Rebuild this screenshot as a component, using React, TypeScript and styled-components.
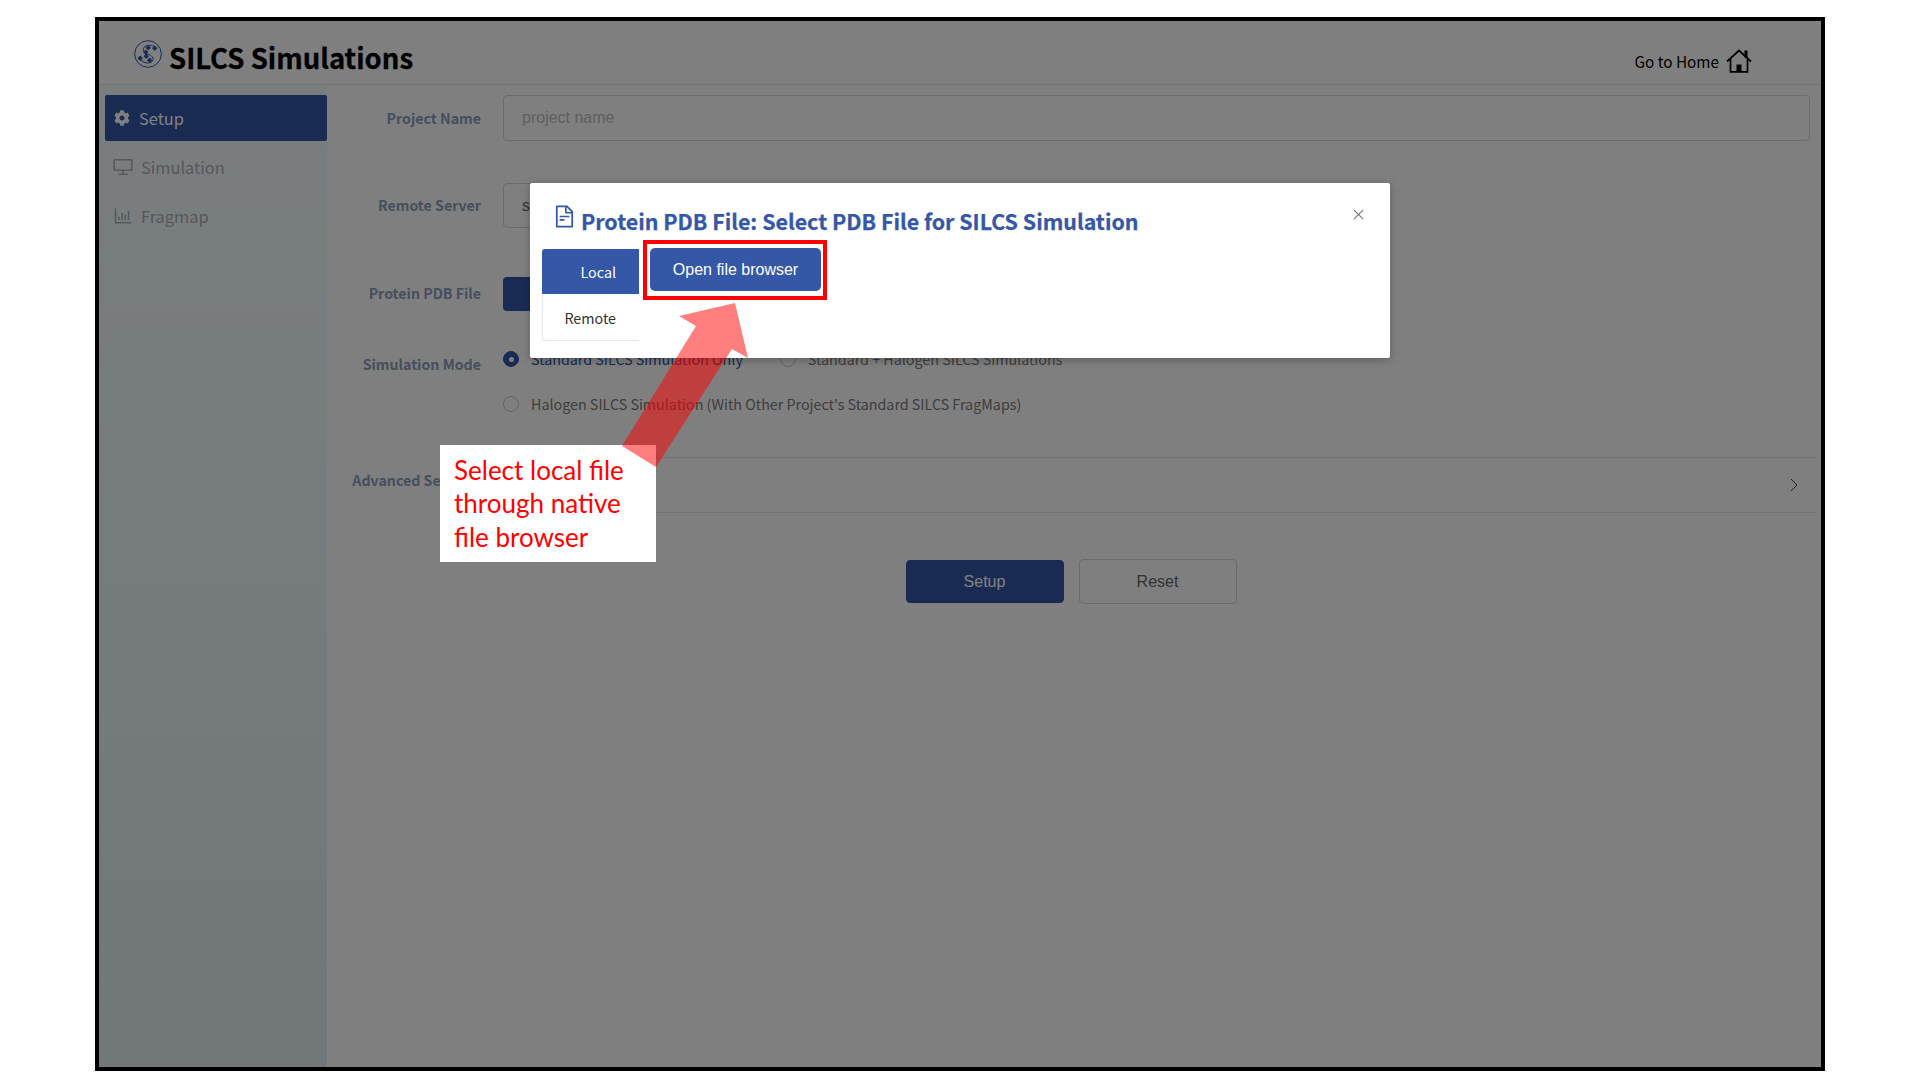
import React from "react";
import styled, { createGlobalStyle } from "styled-components";
import { AiOutlineBarChart, AiOutlineDesktop, AiOutlineFileText, AiOutlineClose } from "react-icons/ai";
import { FaCog } from "react-icons/fa";

const Global = createGlobalStyle`
  html, body { margin: 0; padding: 0; background: #fff; }
  * { box-sizing: border-box; }
  body { font-family: "Noto Sans CJK SC", "Noto Sans", sans-serif; }
`;

const Page = styled.div`
  position: relative;
  width: 1920px;
  height: 1080px;
  overflow: hidden;
  padding: 17px 0 0 95px;
`;

const Frame = styled.div`
  position: relative;
  width: 1730px;
  height: 1054px;
  border: 4px solid #000;
  background: #fff;
  display: flex;
  flex-direction: column;
  overflow: hidden;
`;

const Header = styled.header`
  height: 64px;
  flex: none;
  display: flex;
  align-items: center;
  justify-content: space-between;
  padding: 10px 69px 0 35px;
  border-bottom: 1px solid #e4e4e4;
`;

const Brand = styled.div`
  display: flex;
  align-items: center;
  gap: 7px;
  margin-top: -8px;
`;

const BrandName = styled.h1`
  margin: 0;
  padding-top: 7px;
  font-size: 27.5px;
  font-weight: 700;
  line-height: 33px;
  color: #000;
  -webkit-text-stroke: 0.3px #000;
`;

const HomeLink = styled.a`
  display: flex;
  align-items: center;
  gap: 7px;
  margin-top: 7px;
  font-size: 15.3px;
  color: #000;
`;

const Body = styled.div`
  flex: 1;
  display: flex;
  min-height: 0;
`;

const Sidebar = styled.nav`
  width: 228px;
  flex: none;
  padding: 10px 0 0 6px;
  background: linear-gradient(180deg, #f4fcff 0%, #e4f0f4 100%);
  display: flex;
  flex-direction: column;
  gap: 3px;
`;

const NavItem = styled.div<{ $active?: boolean }>`
  height: 46px;
  display: flex;
  align-items: center;
  gap: ${(p) => (p.$active ? "9px" : "7px")};
  padding-left: ${(p) => (p.$active ? "9px" : "7px")};
  border-radius: 2px;
  font-size: 16.4px;
  background: ${(p) => (p.$active ? "#3557a7" : "transparent")};
  color: ${(p) => (p.$active ? "#fff" : "#aab2b6")};
  svg { font-size: ${(p) => (p.$active ? "16px" : "22px")}; flex: none; }
`;

const Main = styled.main`
  flex: 1;
  padding-top: 10px;
  min-width: 0;
`;

const Row = styled.div<{ $mt?: number; $h?: number; $center?: boolean }>`
  display: grid;
  grid-template-columns: 154px 1fr;
  column-gap: 22px;
  margin-top: ${(p) => p.$mt ?? 0}px;
  min-height: ${(p) => p.$h ?? 46}px;
  padding-right: 11px;
  align-items: ${(p) => (p.$center === false ? "start" : "center")};
`;

const Label = styled.label<{ $pt?: number; $pb?: number }>`
  text-align: right;
  font-size: 14.2px;
  font-weight: 700;
  color: #8c9ebf;
  white-space: nowrap;
  padding-top: ${(p) => p.$pt ?? 0}px;
  padding-bottom: ${(p) => p.$pb ?? 2}px;
`;

const Input = styled.div<{ $placeholder?: boolean; $narrow?: boolean }>`
  height: 100%;
  min-height: 45px;
  max-width: ${(p) => (p.$narrow ? "600px" : "none")};
  display: flex;
  align-items: center;
  padding: 0 18px;
  border: 1px solid #d9d9d9;
  border-radius: 4px;
  font-family: "Liberation Sans", Arial, sans-serif;
  font-size: 16px;
  color: ${(p) => (p.$placeholder ? "#bfbfbf" : "#666")};
`;

const PickerButton = styled.div`
  width: 170px;
  height: 34px;
  background: #3557a7;
  border-radius: 4px;
`;

const RadioGrid = styled.div`
  display: flex;
  flex-direction: column;
  gap: 27px;
`;

const RadioLine = styled.div`
  display: flex;
  gap: 37px;
  height: 18px;
  align-items: center;
`;

const Radio = styled.div`
  display: flex;
  align-items: center;
  gap: 12px;
`;

const RadioDot = styled.span<{ $on?: boolean }>`
  width: 16px;
  height: 16px;
  border-radius: 50%;
  flex: none;
  background: ${(p) => (p.$on ? "#3557a7" : "transparent")};
  border: 1px solid ${(p) => (p.$on ? "#3557a7" : "#c8c8c8")};
  display: flex;
  align-items: center;
  justify-content: center;
  &::after {
    content: "";
    width: 5px;
    height: 5px;
    border-radius: 50%;
    background: ${(p) => (p.$on ? "#fff" : "transparent")};
  }
`;

const RadioText = styled.span<{ $on?: boolean }>`
  font-size: 14.3px;
  line-height: 18px;
  color: ${(p) => (p.$on ? "#3557a7" : "#7c7c7c")};
  white-space: nowrap;
`;

const Collapse = styled.div`
  height: 56px;
  border-top: 1px solid #e8e8e8;
  border-bottom: 1px solid #e8e8e8;
  display: flex;
  align-items: center;
  justify-content: flex-end;
  padding-right: 18px;
  margin-right: -6px;
`;

const Chevron = () => (
  <svg width="8" height="14" viewBox="0 0 8 14" fill="none" stroke="#4a4a4a" strokeWidth="1">
    <path d="M1 1L7 7L1 13" />
  </svg>
);

const Actions = styled.div`
  margin-top: 46px;
  display: flex;
  justify-content: center;
  gap: 15px;
  padding-right: 6px;
`;

const ActionButton = styled.button<{ $primary?: boolean }>`
  width: 158px;
  height: ${(p) => (p.$primary ? "43px" : "45px")};
  margin-top: ${(p) => (p.$primary ? "1px" : "0")};
  border-radius: 4px;
  font-family: "Liberation Sans", Arial, sans-serif;
  font-size: 16px;
  background: ${(p) => (p.$primary ? "#3557a7" : "#fff")};
  color: ${(p) => (p.$primary ? "#fff" : "#666")};
  border: 1px solid ${(p) => (p.$primary ? "#3557a7" : "#d9d9d9")};
`;

const Overlay = styled.div`
  position: absolute;
  inset: 0;
  background: rgba(0, 0, 0, 0.5);
`;

const Modal = styled.section`
  position: absolute;
  left: 431px;
  top: 162px;
  width: 860px;
  height: 175px;
  background: #fff;
  border-radius: 2px;
  box-shadow: 0 2px 8px rgba(0, 0, 0, 0.25);
  padding: 20px 12px;
`;

const ModalHead = styled.div`
  height: 45px;
  display: flex;
  align-items: flex-start;
  padding-left: 10px;
  gap: 4px;
  color: #3557a7;
  svg { font-size: 25px; flex: none; margin-top: 1px; }
`;

const ModalTitle = styled.h2`
  margin: 2px 0 0;
  font-size: 21.4px;
  line-height: 32px;
  font-weight: 700;
  color: #3557a7;
  white-space: nowrap;
  -webkit-text-stroke: 0.25px #3557a7;
`;

const Close = styled.span`
  position: absolute;
  right: 24px;
  top: 24px;
  color: #777;
  display: flex;
  svg { font-size: 15px; }
`;

const ModalBody = styled.div`
  display: flex;
  gap: 11px;
  align-items: flex-start;
`;

const Tabs = styled.div`
  width: 97px;
  margin-top: 1px;
  flex: none;
`;

const Tab = styled.div<{ $active?: boolean }>`
  height: ${(p) => (p.$active ? "45px" : "47px")};
  padding-right: 23px;
  display: flex;
  align-items: center;
  justify-content: flex-end;
  font-size: 14.3px;
  color: ${(p) => (p.$active ? "#fff" : "#333")};
  background: ${(p) => (p.$active ? "#3557a7" : "#fff")};
  border-radius: ${(p) => (p.$active ? "3px 0 0 0" : "0 0 0 3px")};
  border-left: 1px solid ${(p) => (p.$active ? "#3557a7" : "#e6e6ee")};
  border-bottom: ${(p) => (p.$active ? "0" : "1px solid #e6e6ee")};
`;

const OpenButton = styled.button`
  width: 171px;
  height: 43px;
  border: none;
  border-radius: 5px;
  background: #3557a7;
  color: #fff;
  font-family: "Liberation Sans", Arial, sans-serif;
  font-size: 16px;
  padding: 0;
`;

const Highlight = styled.div`
  position: absolute;
  left: 643px;
  top: 240px;
  width: 184px;
  height: 60px;
  border: 4px solid #ff0000;
`;

const Callout = styled.div`
  position: absolute;
  left: 440px;
  top: 445px;
  width: 216px;
  height: 117px;
  background: #fff;
  padding: 9px 0 0 14px;
  font-family: Lato, "Open Sans", sans-serif;
  font-size: 26px;
  line-height: 33.4px;
  color: #ff0000;
  white-space: nowrap;
`;

const ArrowLayer = styled.svg`
  position: absolute;
  inset: 0;
  pointer-events: none;
`;

const Logo = () => (
  <svg width="28" height="28" viewBox="0 0 28 28" fill="none">
    <circle cx="14" cy="14" r="13.3" stroke="#3557a7" strokeWidth="1" />
    <path d="M21 7C15 3 7 6.5 10 11.5C12 15 18 14 19 18.5C20 22.5 13 25.5 7 20" stroke="#3557a7" strokeWidth="1" />
    <g fill="#3557a7">
      <rect x="12.3" y="5.8" width="3.8" height="3.8" transform="rotate(45 14.2 7.7)" />
      <rect x="18.8" y="6.3" width="3.8" height="3.8" transform="rotate(45 20.7 8.2)" />
      <rect x="9.8" y="10.3" width="3.8" height="3.8" transform="rotate(45 11.7 12.2)" />
      <rect x="4.3" y="16.3" width="3.8" height="3.8" transform="rotate(45 6.2 18.2)" />
      <rect x="10.3" y="14.3" width="3.8" height="3.8" transform="rotate(45 12.2 16.2)" />
      <rect x="13.8" y="18.3" width="3.8" height="3.8" transform="rotate(45 15.7 20.2)" />
    </g>
  </svg>
);

const HomeIcon = () => (
  <svg width="26" height="24" viewBox="0 0 26 24" fill="none" stroke="#000" strokeWidth="1.7">
    <path d="M1 12.5L13 1.5L25 12.5" />
    <path d="M4.5 10V22.8H21.5V10" />
    <rect x="10.5" y="15.5" width="5" height="7.3" fill="#000" stroke="none" />
    <rect x="18.5" y="1.5" width="3" height="7" fill="#000" stroke="none" />
  </svg>
);

export default function App() {
  return (
    <Page>
      <Global />
      <Frame>
        <Header>
          <Brand>
            <Logo />
            <BrandName>SILCS Simulations</BrandName>
          </Brand>
          <HomeLink>
            Go to Home
            <HomeIcon />
          </HomeLink>
        </Header>
        <Body>
          <Sidebar>
            <NavItem $active>
              <FaCog />
              Setup
            </NavItem>
            <NavItem>
              <AiOutlineDesktop />
              Simulation
            </NavItem>
            <NavItem>
              <AiOutlineBarChart />
              Fragmap
            </NavItem>
          </Sidebar>
          <Main>
            <Row>
              <Label $pb={0}>Project Name</Label>
              <Input $placeholder>project name</Input>
            </Row>
            <Row $mt={42} $h={45}>
              <Label $pb={1}>Remote Server</Label>
              <Input $narrow>s</Input>
            </Row>
            <Row $mt={49} $h={34}>
              <Label $pb={3}>Protein PDB File</Label>
              <PickerButton />
            </Row>
            <Row $mt={39} $center={false} $h={64}>
              <Label $pt={4}>Simulation Mode</Label>
              <RadioGrid>
                <RadioLine>
                  <Radio>
                    <RadioDot $on />
                    <RadioText $on>Standard SILCS Simulation Only</RadioText>
                  </Radio>
                  <Radio>
                    <RadioDot />
                    <RadioText>Standard + Halogen SILCS Simulations</RadioText>
                  </Radio>
                </RadioLine>
                <RadioLine>
                  <Radio>
                    <RadioDot />
                    <RadioText>Halogen SILCS Simulation (With Other Project's Standard SILCS FragMaps)</RadioText>
                  </Radio>
                </RadioLine>
              </RadioGrid>
            </Row>
            <Row $mt={43} $h={56}>
              <Label $pb={10}>Advanced Settings</Label>
              <Collapse>
                <Chevron />
              </Collapse>
            </Row>
            <Actions>
              <ActionButton $primary>Setup</ActionButton>
              <ActionButton>Reset</ActionButton>
            </Actions>
          </Main>
        </Body>
        <Overlay />
        <Modal>
          <ModalHead>
            <AiOutlineFileText />
            <ModalTitle>Protein PDB File: Select PDB File for SILCS Simulation</ModalTitle>
          </ModalHead>
          <Close>
            <AiOutlineClose />
          </Close>
          <ModalBody>
            <Tabs>
              <Tab $active>Local</Tab>
              <Tab>Remote</Tab>
            </Tabs>
            <OpenButton>Open file browser</OpenButton>
          </ModalBody>
        </Modal>
      </Frame>
      <Highlight />
      <Callout>
        Select local file
        <br />
        through native
        <br />
        file browser
      </Callout>
      <ArrowLayer width="1920" height="1080" viewBox="0 0 1920 1080">
        <polygon points="735,303 679,316 696,326 622,446 656,467 732,349 748,358" fill="rgba(255,0,0,0.5)" />
      </ArrowLayer>
    </Page>
  );
}
